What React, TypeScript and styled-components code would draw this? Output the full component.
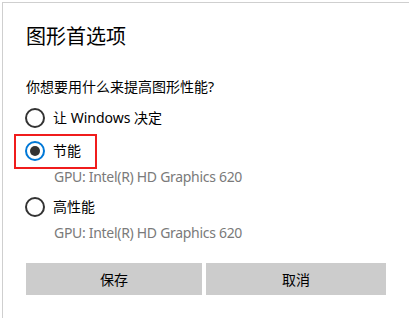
import React, { useState } from 'react';
import styled, { createGlobalStyle } from 'styled-components';

const GlobalStyle = createGlobalStyle`
  html, body {
    margin: 0;
    padding: 0;
    background: #ffffff;
  }
  body {
    font-family: "Noto Sans", "Noto Sans CJK SC", sans-serif;
    color: #000000;
  }
`;

type Option = {
  id: string;
  label: string;
  gpu?: string;
};

const options: Option[] = [
  { id: 'auto', label: '让 Windows 决定' },
  { id: 'saving', label: '节能', gpu: 'GPU: Intel(R) HD Graphics 620' },
  { id: 'performance', label: '高性能', gpu: 'GPU: Intel(R) HD Graphics 620' },
];

export default function App() {
  const [selected, setSelected] = useState('saving');

  return (
    <>
      <GlobalStyle />
      <Window>
        <Title>图形首选项</Title>
        <Question>你想要用什么来提高图形性能?</Question>

        <OptionList>
          {options.map(({ id, label, gpu }) => (
            <OptionItem key={id}>
              <RadioRow
                highlighted={id === 'saving'}
                onClick={() => setSelected(id)}
              >
                <RadioCircle checked={selected === id} />
                <RadioLabel>{label}</RadioLabel>
              </RadioRow>
              {gpu && <GpuName>{gpu}</GpuName>}
            </OptionItem>
          ))}
        </OptionList>

        <ButtonBar>
          <Button>保存</Button>
          <Button>取消</Button>
        </ButtonBar>
      </Window>
    </>
  );
}

const Window = styled.div`
  box-sizing: border-box;
  margin: 2px 0 0 2px;
  height: 316px;
  padding: 20px 23px 0;
  border-top: solid 1px #cfcfcf;
  border-left: solid 1px #cfcfcf;
`;

const Title = styled.div`
  font-size: 20px;
  line-height: 28px;
  font-weight: normal;
`;

const Question = styled.div`
  margin-top: 26px;
  font-size: 14px;
  line-height: 20px;
`;

const OptionList = styled.div`
  display: flex;
  flex-flow: column;
  margin-top: 5px;
`;

const OptionItem = styled.div`
  display: flex;
  flex-flow: column;

  & + & {
    margin-top: 1px;
  }
  &:last-child {
    margin-top: 4px;
  }
`;

const RadioRow = styled.label<{ highlighted?: boolean }>`
  position: relative;
  display: flex;
  align-items: center;
  gap: 8px;
  height: 32px;
  cursor: default;

  ${({ highlighted }) =>
    highlighted &&
    `
    &::after {
      content: '';
      position: absolute;
      left: -12px;
      top: -1px;
      width: 79px;
      height: 31px;
      border: solid 2px #f01c1c;
      pointer-events: none;
    }
  `}
`;

const RadioCircle = styled.span<{ checked?: boolean }>`
  position: relative;
  box-sizing: border-box;
  flex: 0 0 auto;
  width: 20px;
  height: 20px;
  margin-left: -1px;
  border-radius: 50%;
  border: solid 2px ${({ checked }) => (checked ? '#0078d7' : '#333333')};

  &::after {
    content: '';
    display: ${({ checked }) => (checked ? 'block' : 'none')};
    position: absolute;
    left: 3px;
    top: 3px;
    width: 10px;
    height: 10px;
    border-radius: 50%;
    background: #333333;
  }
`;

const RadioLabel = styled.span`
  font-size: 14px;
  line-height: 20px;
`;

const GpuName = styled.div`
  padding-left: 28px;
  color: #7a7a7a;
  font-size: 14px;
  line-height: 20px;
  letter-spacing: -0.3px;
`;

const ButtonBar = styled.div`
  display: grid;
  grid-template-columns: 176px 180px;
  gap: 4px;
  margin-top: 20px;
`;

const Button = styled.button.attrs({ type: 'button' })`
  height: 32px;
  padding: 0;
  border: none;
  background-color: #cccccc;
  color: #000000;
  font-family: "Noto Sans CJK SC", sans-serif;
  font-size: 14px;
`;
